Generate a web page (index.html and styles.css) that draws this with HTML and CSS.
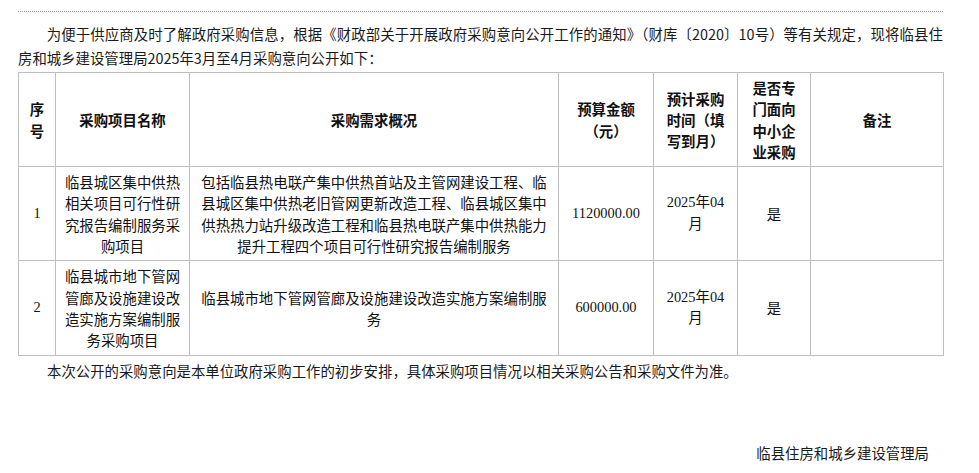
FILE: index.html
```html
<!DOCTYPE html>
<html lang="zh-CN">
<head>
<meta charset="utf-8">
<title>采购意向公开</title>
<link rel="stylesheet" href="styles.css">
</head>
<body>
<div class="page">
  <div class="rule"></div>
  <p class="intro">为便于供应商及时了解政府采购信息，根据《财政部关于开展政府采购意向公开工作的通知》（财库〔2020〕10号）等有关规定，现将临县住房和城乡建设管理局2025年3月至4月采购意向公开如下：</p>
  <table class="plan">
    <colgroup>
      <col class="c-no">
      <col class="c-name">
      <col class="c-desc">
      <col class="c-budget">
      <col class="c-time">
      <col class="c-sme">
      <col class="c-note">
    </colgroup>
    <thead>
      <tr>
        <th>序号</th>
        <th>采购项目名称</th>
        <th>采购需求概况</th>
        <th>预算金额（元）</th>
        <th>预计采购时间（填写到月）</th>
        <th>是否专门面向中小企业采购</th>
        <th>备注</th>
      </tr>
    </thead>
    <tbody>
      <tr>
        <td class="num">1</td>
        <td class="name">临县城区集中供热相关项目可行性研究报告编制服务采购项目</td>
        <td>包括临县热电联产集中供热首站及主管网建设工程、临县城区集中供热老旧管网更新改造工程、临县城区集中供热热力站升级改造工程和临县热电联产集中供热能力提升工程四个项目可行性研究报告编制服务</td>
        <td class="num">1120000.00</td>
        <td class="num">2025年04月</td>
        <td>是</td>
        <td></td>
      </tr>
      <tr>
        <td class="num">2</td>
        <td class="name">临县城市地下管网管廊及设施建设改造实施方案编制服务采购项目</td>
        <td>临县城市地下管网管廊及设施建设改造实施方案编制服务</td>
        <td class="num">600000.00</td>
        <td class="num">2025年04月</td>
        <td>是</td>
        <td></td>
      </tr>
    </tbody>
  </table>
  <p class="note">本次公开的采购意向是本单位政府采购工作的初步安排，具体采购项目情况以相关采购公告和采购文件为准。</p>
  <p class="sign">临县住房和城乡建设管理局</p>
</div>
</body>
</html>
```

FILE: styles.css
```css
html, body {
  margin: 0;
  padding: 0;
  background: #ffffff;
}

body {
  font-family: "Noto Sans CJK SC", "Noto Sans", sans-serif;
  font-size: 14.4px;
  color: #1a1a1a;
}

.page {
  width: 925px;
  padding: 11px 0 0 18px;
}

.rule {
  border-top: 1px dotted #9a9a9a;
  height: 0;
}

.intro {
  margin: 10px 0 3px 0;
  line-height: 23.5px;
  text-indent: 2em;
  text-align: justify;
}

.plan {
  width: 925px;
  border-collapse: collapse;
  table-layout: fixed;
}

.c-no { width: 37px; }
.c-name { width: 134px; }
.c-desc { width: 369px; }
.c-budget { width: 95px; }
.c-time { width: 84px; }
.c-sme { width: 73px; }
.c-note { width: 133px; }

.plan th,
.plan td {
  border: 1px solid #bfbfbf;
  padding: 4px 9px;
  line-height: 21.3px;
  text-align: center;
  vertical-align: middle;
  color: #111;
}

.plan td.name {
  padding-left: 6px;
  padding-right: 6px;
}

.plan th {
  font-weight: bold;
  height: 85px;
}

.plan td {
  height: 85px;
}

.plan td.num {
  font-family: "Liberation Serif", "Noto Sans CJK SC", serif;
}

.note {
  margin: 4px 0 0 29px;
  line-height: 22px;
}

.sign {
  margin: 60px 14px 0 0;
  line-height: 22px;
  text-align: right;
}
```
